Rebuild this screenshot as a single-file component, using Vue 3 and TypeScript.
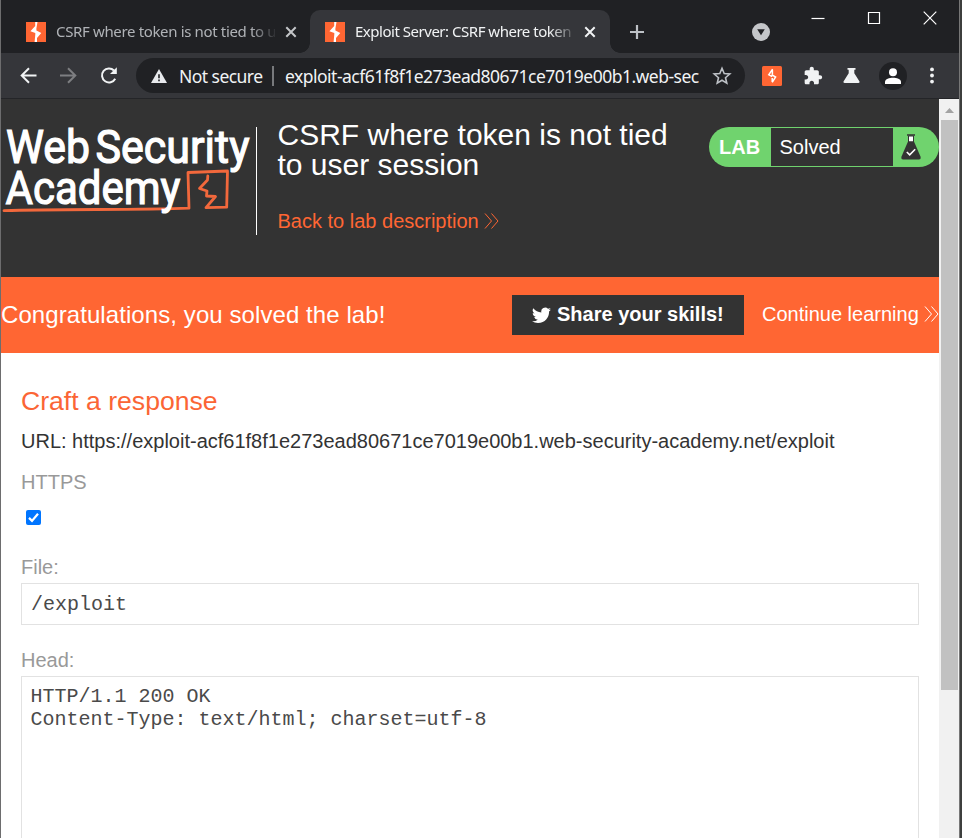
<script setup lang="ts">
import { ref } from 'vue'

interface Tab {
  title: string
  active: boolean
}

const tabs: Tab[] = [
  { title: 'CSRF where token is not tied to user session', active: false },
  { title: 'Exploit Server: CSRF where token is not tied', active: true },
]
const exploitUrl = 'https://exploit-acf61f8f1e273ead80671ce7019e00b1.web-security-academy.net/exploit'
const https = ref(true)
const file = ref('/exploit')
const head = ref('HTTP/1.1 200 OK\nContent-Type: text/html; charset=utf-8')
</script>

<template>
  <div class="screen">
    <div class="window">
      <div class="tabstrip">
        <div v-for="tab in tabs" :key="tab.title" class="tab" :class="{ active: tab.active }">
          <svg class="favicon" viewBox="0 0 20 20">
            <rect width="20" height="20" fill="#ff6633" />
            <path d="M9.200 0H11.500L10.400 6.600L10.400 8.600L15.300 11L11 16V20H8.600L9.300 12.600V10.900L4.400 9.200L9.200 4Z" fill="#fff" />
          </svg>
          <span class="tab-title">{{ tab.title }}</span>
          <svg class="tab-close" viewBox="0 0 12 12"><path d="M1.3 1.3L10.7 10.7M10.7 1.3L1.3 10.7" /></svg>
        </div>
        <svg class="new-tab" viewBox="0 0 16 16"><path d="M8 1V15M1 8H15" /></svg>
        <svg class="tab-search" viewBox="0 0 18 18">
          <circle cx="9" cy="9" r="9" fill="#c4c6c9" />
          <path d="M5.2 6.3H12.8L9 12.3Z" fill="#202124" />
        </svg>
        <div class="controls">
          <svg viewBox="0 0 14 14"><path d="M0.5 7.5H13.5" /></svg>
          <svg viewBox="0 0 14 14"><path d="M1.500 1.5H12.5V12.500H1.500Z" /></svg>
          <svg viewBox="0 0 14 14"><path d="M0.7 0.7L13.3 13.3M13.3 0.7L0.7 13.3" /></svg>
        </div>
      </div>

      <div class="toolbar">
        <svg class="nav" viewBox="0 0 20 20"><path d="M18.500 9.500H4M11 2.200L3.700 9.500L11 16.800" /></svg>
        <svg class="nav dim" viewBox="0 0 20 20"><path d="M2 9.500H17M10 2.200L17.3 9.500L10 16.800" /></svg>
        <svg class="nav reload" viewBox="0 0 20 20">
          <path d="M16.2 12.700A7 7 0 1 1 15 4.500" />
          <path d="M17.8 1.3V8.1H11Z" class="solid" />
        </svg>
        <div class="omnibox">
          <svg class="warn" viewBox="0 0 16 14">
            <path d="M8 0L16 14H0Z" fill="#e8eaed" />
            <path d="M7.2 5.2H8.8V9.2H7.2ZM7.2 10.6H8.8V12.2H7.2Z" fill="#202124" />
          </svg>
          <span class="not-secure">Not secure</span>
          <span class="bar"></span>
          <span class="address">exploit-acf61f8f1e273ead80671ce7019e00b1.web-sec</span>
          <svg class="star" viewBox="0 0 20 20">
            <path d="M10 2.3L12.2 7.5L17.8 8L13.5 11.7L14.8 17.2L10 14.3L5.2 17.2L6.5 11.7L2.2 8L7.8 7.5Z" />
          </svg>
        </div>
        <svg class="ext burp" viewBox="0 0 20 20">
          <rect width="20" height="20" rx="1.5" fill="#ff6633" />
          <path d="M10.600 3.200L6.800 8.800L10.200 10.600M10.400 4V8.200M9.600 8.600L13.600 11L10.200 16.400M10.200 12V16" fill="none" stroke="#fff" stroke-width="1.5" />
        </svg>
        <svg class="ext puzzle" viewBox="0 0 24 24">
          <path d="M20.5 11H19V7c0-1.1-.9-2-2-2h-4V3.500C13 2.120 11.880 1 10.500 1S8 2.120 8 3.500V5H4c-1.100 0-2 .9-2 2v3.800h1.500c1.500 0 2.700 1.200 2.700 2.700S5 16.200 3.500 16.200H2V20c0 1.100.9 2 2 2h3.800v-1.500c0-1.500 1.200-2.700 2.700-2.700s2.700 1.200 2.700 2.700V22H17c1.100 0 2-.9 2-2v-4h1.500c1.380 0 2.500-1.120 2.500-2.500S21.880 11 20.500 11z" />
        </svg>
        <svg class="ext flask" viewBox="0 0 18 18">
          <path d="M4.500 1H12.500V2.800H11.300V6.300L16.500 14.600Q17 16 15.500 16H1.500Q0 16 .5 14.600L5.700 6.300V2.800H4.500Z" />
        </svg>
        <svg class="avatar" viewBox="0 0 28 28">
          <circle cx="14" cy="14" r="14" fill="#202124" />
          <circle cx="14" cy="10.200" r="4" fill="#fff" />
          <path d="M6 22V20C6 17 10.500 15.700 14 15.700S22 17 22 20V22Z" fill="#fff" />
        </svg>
        <svg class="menu" viewBox="0 0 4 18">
          <circle cx="2" cy="2.400" r="1.900" /><circle cx="2" cy="8.500" r="1.900" /><circle cx="2" cy="14.600" r="1.900" />
        </svg>
      </div>

      <div class="viewport">
        <main class="page">
          <header class="lab-header">
            <svg class="logo" viewBox="0 0 252 120">
              <path d="M3 93.700Q30 92.700 95 92.500T188 91.200L187 55.500L226.500 54L225.700 90.200L205 90.700L214.500 79.500L205.500 79L206 74L198.500 71.500L206.500 63L206.800 59" class="scribble" />
              <text x="5" y="45.500" textLength="84" lengthAdjust="spacingAndGlyphs">Web</text>
              <text x="94.500" y="45.500" textLength="154" lengthAdjust="spacingAndGlyphs">Security</text>
              <text x="4.500" y="86.500" textLength="175" lengthAdjust="spacingAndGlyphs">Academy</text>
            </svg>
            <div class="title">
              <h1>CSRF where token is not tied<br />to user session</h1>
              <a class="back">
                <span>Back to lab description</span>
                <svg class="chev" viewBox="0 0 15 16"><path d="M1 .5L7.500 8L1 15.500M7.500 .5L14 8L7.500 15.500" /></svg>
              </a>
            </div>
            <div class="badge">
              <strong>LAB</strong>
              <span class="status">Solved</span>
              <svg class="badge-flask" viewBox="0 0 20 26">
                <path d="M6 1H14" stroke="#333" stroke-width="1.500" />
                <path d="M7.500 2H12.500V8H7.500Z" fill="#fff" stroke="#333" />
                <path d="M7 7.500H13L19.700 23Q20 25.500 18 25.500H2Q0 25.500 .3 23Z" fill="#333" />
                <path d="M5.800 18L8.700 20.800L14.200 15.300" fill="none" stroke="#fff" stroke-width="1.600" />
              </svg>
            </div>
          </header>

          <section class="banner">
            <span class="congrats">Congratulations, you solved the lab!</span>
            <button class="share">
              <svg viewBox="0 0 24 20">
                <path d="M24 2.370a9.800 9.800 0 0 1-2.830.78A4.930 4.930 0 0 0 23.340.42a9.900 9.900 0 0 1-3.130 1.190 4.920 4.920 0 0 0-8.390 4.490A13.980 13.980 0 0 1 1.670.95a4.920 4.920 0 0 0 1.520 6.570 4.900 4.900 0 0 1-2.230-.61v.06a4.930 4.930 0 0 0 3.950 4.830 4.900 4.900 0 0 1-2.220.08 4.930 4.930 0 0 0 4.600 3.420A9.880 9.880 0 0 1 0 17.340a13.940 13.940 0 0 0 7.550 2.210c9.050 0 14-7.500 14-14v-.63A10 10 0 0 0 24 2.370z" />
              </svg>
              <span>Share your skills!</span>
            </button>
            <a class="continue">
              <span>Continue learning</span>
              <svg class="chev" viewBox="0 0 15 16"><path d="M1 .5L7.500 8L1 15.500M7.500 .5L14 8L7.500 15.500" /></svg>
            </a>
          </section>

          <form class="craft">
            <h2>Craft a response</h2>
            <p class="url">URL: {{ exploitUrl }}</p>
            <label class="https-label" for="https">HTTPS</label>
            <label class="check">
              <input id="https" v-model="https" type="checkbox" />
              <svg v-if="https" viewBox="0 0 15 15"><path d="M3 7.900L6 10.900L12 3.800" /></svg>
            </label>
            <label class="file-label" for="file">File:</label>
            <input id="file" v-model="file" class="field" type="text" />
            <label class="head-label" for="head">Head:</label>
            <textarea id="head" v-model="head" class="field area" spellcheck="false"></textarea>
          </form>
        </main>
        <div class="scrollbar">
          <svg viewBox="0 0 20 21"><path d="M6 14L10.500 9L15 14Z" fill="#a3a3a3" /></svg>
          <div class="thumb"></div>
        </div>
      </div>
    </div>
    <div class="edge"></div>
  </div>
</template>

<style>
body {
  background: #fff;
  overflow: hidden;
}
</style>

<style scoped>
* {
  box-sizing: border-box;
}
.screen {
  display: flex;
  width: 962px;
  height: 838px;
  overflow: hidden;
  border-left: 1px solid #6d6d6e;
  font-family: "Liberation Sans", Arial, sans-serif;
  font-size: 20px;
}
.window {
  display: flex;
  flex-direction: column;
  width: 958px;
}
.edge {
  width: 3px;
  border-left: 1px solid #777;
  background: #3d3f3e;
}
svg {
  display: block;
  flex: none;
}

/* Tab strip */
.tabstrip {
  display: flex;
  height: 53px;
  padding: 10px 0 0 9px;
  background: #202124;
  font-family: "Noto Sans", "Open Sans", sans-serif;
  font-size: 15px;
}
.tab {
  position: relative;
  display: flex;
  align-items: center;
  width: 300px;
  height: 43px;
  padding: 0 13px 0 16px;
  color: #b0b3b7;
}
.tab.active {
  padding-left: 15px;
  background: #35363a;
  border-radius: 10px 10px 0 0;
  color: #f1f3f4;
}
.tab.active::before,
.tab.active::after {
  content: "";
  position: absolute;
  bottom: 0;
  width: 10px;
  height: 10px;
}
.tab.active::before {
  left: -10px;
  background: radial-gradient(circle at 0 0, transparent 9.5px, #35363a 10px);
}
.tab.active::after {
  right: -10px;
  background: radial-gradient(circle at 100% 0, transparent 9.5px, #35363a 10px);
}
.favicon {
  width: 20px;
  height: 20px;
}
.tab-title {
  width: 220px;
  margin: -1px 0 0 10px;
  overflow: hidden;
  white-space: nowrap;
  letter-spacing: -0.35px;
  mask-image: linear-gradient(to right, #000 195px, transparent 222px);
}
.tab.active .tab-title {
  letter-spacing: -0.48px;
}
.tab-close {
  width: 12px;
  height: 12px;
  margin: 0 0 0 10px;
  fill: none;
  stroke: currentColor;
  stroke-width: 2;
}
.tab.active .tab-close {
  margin-left: 9px;
}
.tab:not(.active) .tab-close {
  stroke: #c4c6c9;
}
.new-tab {
  width: 16px;
  height: 16px;
  margin: 14px 0 0 19px;
  stroke: #bdc1c6;
  stroke-width: 2.2;
}
.tab-search {
  width: 18px;
  height: 18px;
  margin: 13px 0 0 107px;
}
.controls {
  display: flex;
  gap: 42px;
  margin: 1px 0 0 41px;
}
.controls svg {
  width: 14px;
  height: 14px;
  fill: none;
  stroke: #fff;
  stroke-width: 1.2;
}

/* Toolbar */
.toolbar {
  display: flex;
  align-items: center;
  height: 46px;
  padding-left: 17px;
  border-bottom: 1px solid #242528;
  background: #35363a;
  font-family: "Noto Sans", "Open Sans", sans-serif;
}
.nav {
  width: 20px;
  height: 20px;
  margin-right: 20px;
  fill: none;
  stroke: #f1f3f4;
  stroke-width: 2;
}
.nav.dim {
  margin-right: 21px;
  stroke: #7d7e81;
}
.nav .solid {
  fill: #f1f3f4;
  stroke: none;
}
.omnibox {
  display: flex;
  align-items: center;
  width: 609px;
  height: 35px;
  margin-left: -3px;
  padding-left: 15px;
  border-radius: 18px;
  background: #202124;
  color: #f1f3f4;
  font-size: 17.5px;
  white-space: nowrap;
}
.warn {
  width: 16px;
  height: 14px;
}
.not-secure {
  width: 84px;
  margin-left: 12px;
  letter-spacing: -0.55px;
}
.bar {
  width: 2px;
  height: 20px;
  margin-left: 9px;
  background: #77797c;
}
.address {
  width: 416px;
  margin-left: 11px;
  overflow: hidden;
  letter-spacing: -0.51px;
}
.star {
  width: 20px;
  height: 20px;
  margin-left: 11px;
  fill: none;
  stroke: #bdc1c6;
  stroke-width: 1.6;
}
.ext {
  fill: #f1f3f4;
}
.burp {
  width: 20px;
  height: 20px;
  margin-left: 17px;
}
.puzzle {
  width: 20px;
  height: 20px;
  margin-left: 21px;
}
.flask {
  width: 18px;
  height: 18px;
  margin-left: 20px;
}
.avatar {
  width: 28px;
  height: 28px;
  margin-left: 18px;
}
.menu {
  width: 4px;
  height: 18px;
  margin-left: 23px;
  fill: #f1f3f4;
}

/* Page */
.viewport {
  display: flex;
  flex: 1;
  min-height: 0;
}
.page {
  width: 938px;
  background: #fff;
  overflow: hidden;
}
.lab-header {
  display: flex;
  height: 178px;
  background: #333;
}
.logo {
  width: 252px;
  height: 120px;
  margin-top: 18px;
  overflow: visible;
}
.logo text {
  fill: #fff;
  font-family: Roboto, sans-serif;
  font-size: 46.5px;
  font-weight: 400;
  stroke: #fff;
  stroke-width: 1.2;
}
.scribble {
  fill: none;
  stroke: #f2683c;
  stroke-width: 2.8;
  stroke-linejoin: round;
  stroke-linecap: round;
}
.title {
  align-self: flex-start;
  width: 415px;
  height: 108px;
  margin: 28px 0 0 3px;
  padding-left: 20.5px;
  border-left: 1px solid #fff;
}
h1 {
  margin: -7px 0 0;
  color: #fff;
  font-size: 30px;
  font-weight: 400;
  line-height: 30px;
  white-space: nowrap;
}
.back,
.continue {
  display: flex;
  align-items: center;
  gap: 5px;
  line-height: 24px;
  white-space: nowrap;
}
.back {
  margin-top: 29px;
  color: #ff6633;
}
.chev {
  width: 15px;
  height: 16px;
  fill: none;
  stroke: currentColor;
  stroke-width: 1;
}
.badge {
  display: flex;
  width: 230px;
  height: 40px;
  margin: 28px 0 0 38px;
  padding: 1px 0;
  border-radius: 20px;
  background: #70d36e;
  color: #fff;
  line-height: 39px;
}
.badge strong {
  width: 62px;
  padding-left: 10px;
  font-size: 20px;
}
.status {
  width: 122px;
  padding-left: 8.5px;
  background: #333;
}
.badge-flask {
  width: 20px;
  height: 26px;
  margin: 6px 0 0 8px;
}
.banner {
  display: flex;
  align-items: center;
  height: 76px;
  background: #ff6633;
  color: #fff;
}
.congrats {
  width: 511px;
  flex: none;
  font-size: 24px;
  letter-spacing: 0.08px;
}
.share {
  display: flex;
  flex: none;
  align-items: center;
  width: 232px;
  height: 40px;
  padding: 0 0 2px 20px;
  border: 0;
  background: #333;
  color: #fff;
  font: 700 20px "Liberation Sans", Arial, sans-serif;
  white-space: nowrap;
}
.share svg {
  width: 19px;
  height: 17px;
  margin: 2px 6px 0 0;
  fill: #fff;
}
.continue {
  margin: -2px 0 0 18px;
}

/* Form */
.craft {
  display: flex;
  flex-direction: column;
  padding: 31px 20px 0;
  color: #333;
}
h2 {
  height: 34px;
  margin: 0;
  color: #fb6535;
  font-size: 26.6px;
  font-weight: 400;
  line-height: 34px;
}
.url {
  height: 24px;
  margin: 11px 0 0;
  line-height: 24px;
  white-space: nowrap;
}
.https-label,
.file-label,
.head-label {
  height: 24px;
  color: #999;
  line-height: 24px;
}
.https-label {
  margin-top: 17px;
}
.check {
  display: grid;
  width: 15px;
  height: 15px;
  margin: 16px 0 0 5px;
  border-radius: 2px;
  background: #0075ff;
}
.check input,
.check svg {
  grid-area: 1 / 1;
  width: 15px;
  height: 15px;
  margin: 0;
}
.check input {
  appearance: none;
}
.check svg {
  fill: none;
  stroke: #fff;
  stroke-width: 2.2;
}
.file-label {
  margin-top: 30px;
}
.head-label {
  margin-top: 23px;
}
.field {
  display: block;
  width: 898px;
  height: 42px;
  margin: 4px 0 0;
  padding: 0 9px;
  border: 1px solid #e2e2e2;
  border-radius: 0;
  outline: 0;
  background: #fff;
  color: #4a4a4a;
  font: 20px/23px "Liberation Mono", monospace;
}
.area {
  height: 200px;
  padding: 8px 8.5px;
  resize: none;
  overflow: hidden;
}

/* Scrollbar */
.scrollbar {
  width: 20px;
  background: #f1f1f1;
}
.scrollbar svg {
  width: 20px;
  height: 21px;
}
.thumb {
  width: 17px;
  height: 570px;
  margin-left: 2px;
  background: #c1c1c1;
}
</style>
